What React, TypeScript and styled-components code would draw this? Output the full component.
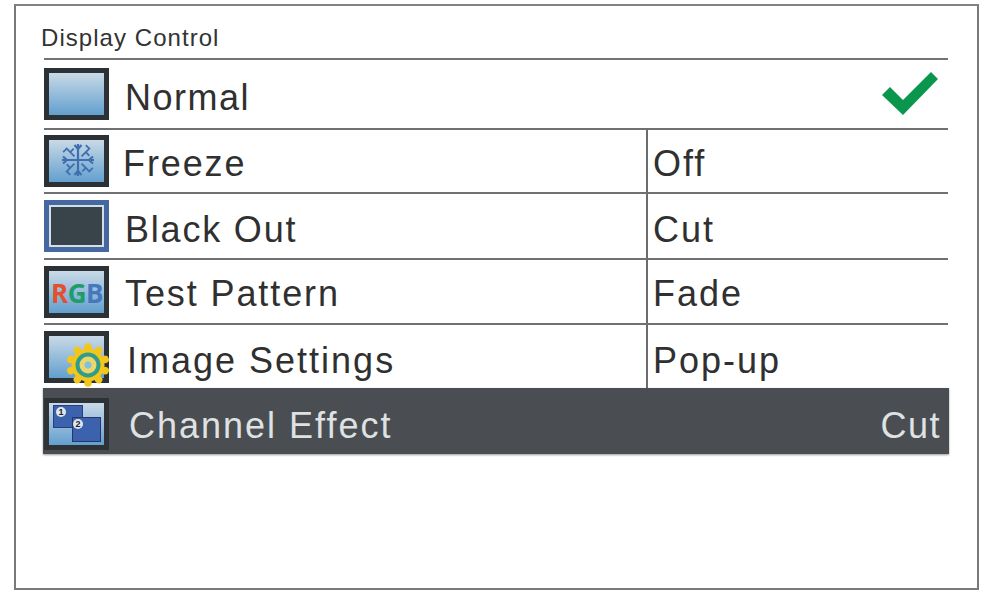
import * as React from 'react';
import styled, { createGlobalStyle } from 'styled-components';

const GlobalStyle = createGlobalStyle`
  html, body {
    margin: 0;
    padding: 0;
    background: #fff;
    font-family: "Liberation Sans", Arial, sans-serif;
  }
`;

const Frame = styled.div`
  box-sizing: border-box;
  width: 965px;
  height: 586px;
  margin: 4px 0 0 14px;
  padding: 17px 29px 0 25px;
  border: 2px solid #77797b;
  border-top-color: #808284;
  background: #fff;
`;

const Title = styled.div`
  height: 35px;
  font-size: 24px;
  line-height: 30px;
  letter-spacing: 1.05px;
  color: #333;
`;

const Menu = styled.div`
  margin-left: 3px;
  border-top: 2px solid #717375;
`;

const Row = styled.div<{ $height: number }>`
  box-sizing: border-box;
  display: flex;
  align-items: stretch;
  height: ${(p) => p.$height}px;
  border-bottom: 2px solid #6e7072;
`;

const ActiveRow = styled.div`
  box-sizing: border-box;
  display: flex;
  align-items: center;
  height: 66px;
  margin: -2px -1px 0;
  padding: 5px 0 0 1px;
  background: #4a4e52;
  box-shadow: 0 1px 2px #9a9a9a;
  color: #dfe2e3;
`;

const MainCell = styled.div`
  display: flex;
  align-items: center;
  flex: 1;
  min-width: 0;
`;

const ValueCell = styled.div<{ $drop: number }>`
  display: flex;
  align-items: center;
  box-sizing: border-box;
  width: 302px;
  padding: ${(p) => p.$drop}px 0 0 5px;
  border-left: 2px solid #6a6c6e;
  font-size: 36px;
  letter-spacing: 2px;
  color: #303030;
`;

const IconBox = styled.svg`
  display: block;
  flex: none;
  width: 65px;
  height: 52px;
  overflow: visible;
`;

const Label = styled.span<{ $indent: number; $drop: number; $light?: boolean; $spacing?: number }>`
  margin-left: ${(p) => p.$indent}px;
  padding-top: ${(p) => p.$drop}px;
  font-size: 36px;
  line-height: 40px;
  letter-spacing: ${(p) => p.$spacing ?? 1.9}px;
  white-space: nowrap;
  color: ${(p) => (p.$light ? '#dfe2e3' : '#303030')};
`;

const ActiveValue = styled.span`
  margin-left: auto;
  padding: 5px 8px 0 0;
  font-size: 36px;
  letter-spacing: 1.5px;
`;

const CheckMark = styled.svg`
  flex: none;
  width: 58px;
  height: 46px;
  margin-left: auto;
  margin-right: 9px;
`;

const NormalIcon = () => (
  <IconBox viewBox="0 0 65 52">
    <defs>
      <linearGradient id="screen" x1="0" y1="0" x2="0" y2="1">
        <stop offset="0" stopColor="#cfdde8" />
        <stop offset="1" stopColor="#5c9ccd" />
      </linearGradient>
    </defs>
    <rect x="2.5" y="2.5" width="60" height="47" fill="url(#screen)" stroke="#2b3135" strokeWidth="5" />
  </IconBox>
);

const snowArms = [0, 90, 180, 270];
const snowDiagonals = [45, 135, 225, 315];

const FreezeIcon = () => (
  <IconBox viewBox="0 0 65 52">
    <rect x="2.5" y="2.5" width="60" height="47" fill="url(#screen)" stroke="#2b3135" strokeWidth="5" />
    <g transform="translate(34 25)" stroke="#3f6fb0" fill="none" strokeWidth="2.2">
      {snowArms.map((angle) => (
        <path key={angle} d="M0 0V-16M-3.5 -15L0 -11L3.5 -15" transform={`rotate(${angle})`} />
      ))}
      {snowDiagonals.map((angle) => (
        <path key={angle} d="M0 -5V-17M-5 -16H0M5 -11L0 -11" transform={`rotate(${angle})`} strokeWidth="1.8" />
      ))}
    </g>
  </IconBox>
);

const BlackOutIcon = () => (
  <IconBox viewBox="0 0 65 52">
    <rect width="65" height="52" fill="#44689f" />
    <rect x="6" y="6" width="53" height="40" fill="#38434a" stroke="#d5dee6" strokeWidth="2" />
  </IconBox>
);

const RgbLetters = styled.text`
  font-family: "Open Sans", sans-serif;
  font-weight: 700;
  font-size: 26px;
  letter-spacing: -0.5px;
`;

const RgbIcon = () => (
  <IconBox viewBox="0 0 65 52">
    <rect x="2.5" y="2.5" width="60" height="47" fill="url(#screen)" stroke="#2b3135" strokeWidth="5" />
    <RgbLetters x="7" y="37">
      <tspan fill="#e2502f">R</tspan>
      <tspan fill="#1f9c6a">G</tspan>
      <tspan fill="#4678bd">B</tspan>
    </RgbLetters>
  </IconBox>
);

const gearTeeth = [0, 36, 72, 108, 144, 180, 216, 252, 288, 324];

const ImageIcon = () => (
  <IconBox viewBox="0 0 65 52">
    <rect x="2.5" y="2.5" width="60" height="47" fill="url(#screen)" stroke="#2b3135" strokeWidth="5" />
    <g transform="translate(44 34)">
      {gearTeeth.map((angle) => (
        <circle key={angle} cy="-18" r="3.8" fill="#f3c61c" transform={`rotate(${angle})`} />
      ))}
      <circle r="16.5" fill="#f3c61c" />
      <circle r="12.5" fill="#2f9c8e" />
      <circle r="8.5" fill="#ead66a" />
      <circle r="3.5" fill="#7fc0dc" />
    </g>
  </IconBox>
);

const BadgeNumber = styled.text`
  font-family: "Liberation Sans", sans-serif;
  font-weight: 700;
  font-size: 9px;
  text-anchor: middle;
`;

const ChannelIcon = () => (
  <IconBox viewBox="0 0 65 52">
    <rect x="2.5" y="2.5" width="60" height="47" fill="url(#screen)" stroke="#2e3236" strokeWidth="5" />
    <rect x="9.5" y="7.5" width="29" height="22" fill="#3d62ad" stroke="#2a3d80" />
    <rect x="28.5" y="19.5" width="28" height="24" fill="#3d62ad" stroke="#26356b" />
    <circle cx="17" cy="14" r="5" fill="#dfe6ee" />
    <BadgeNumber x="17" y="17" fill="#222">1</BadgeNumber>
    <circle cx="34" cy="26" r="5" fill="#dfe6ee" />
    <BadgeNumber x="34" y="29" fill="#222">2</BadgeNumber>
  </IconBox>
);

const App: React.FC = () => (
  <>
    <GlobalStyle />
    <Frame>
      <Title>Display Control</Title>
      <Menu>
        <Row $height={70}>
          <MainCell>
            <NormalIcon />
            <Label $indent={16} $drop={8} $spacing={1.5}>Normal</Label>
            <CheckMark viewBox="0 0 58 46">
              <path d="M1 24L9 16L22 29L50 1L57 8L22 44Z" fill="#0b964d" />
            </CheckMark>
          </MainCell>
        </Row>
        <Row $height={64}>
          <MainCell>
            <FreezeIcon />
            <Label $indent={14} $drop={6}>Freeze</Label>
          </MainCell>
          <ValueCell $drop={6}>Off</ValueCell>
        </Row>
        <Row $height={66}>
          <MainCell>
            <BlackOutIcon />
            <Label $indent={16} $drop={8} $spacing={1.8}>Black Out</Label>
          </MainCell>
          <ValueCell $drop={8}>Cut</ValueCell>
        </Row>
        <Row $height={65}>
          <MainCell>
            <RgbIcon />
            <Label $indent={16} $drop={4}>Test Pattern</Label>
          </MainCell>
          <ValueCell $drop={4}>Fade</ValueCell>
        </Row>
        <Row $height={65}>
          <MainCell>
            <ImageIcon />
            <Label $indent={18} $drop={8} $spacing={2}>Image Settings</Label>
          </MainCell>
          <ValueCell $drop={8}>Pop-up</ValueCell>
        </Row>
        <ActiveRow>
          <MainCell>
            <ChannelIcon />
            <Label $indent={20} $drop={5} $spacing={2} $light>Channel Effect</Label>
            <ActiveValue>Cut</ActiveValue>
          </MainCell>
        </ActiveRow>
      </Menu>
    </Frame>
  </>
);

export default App;
